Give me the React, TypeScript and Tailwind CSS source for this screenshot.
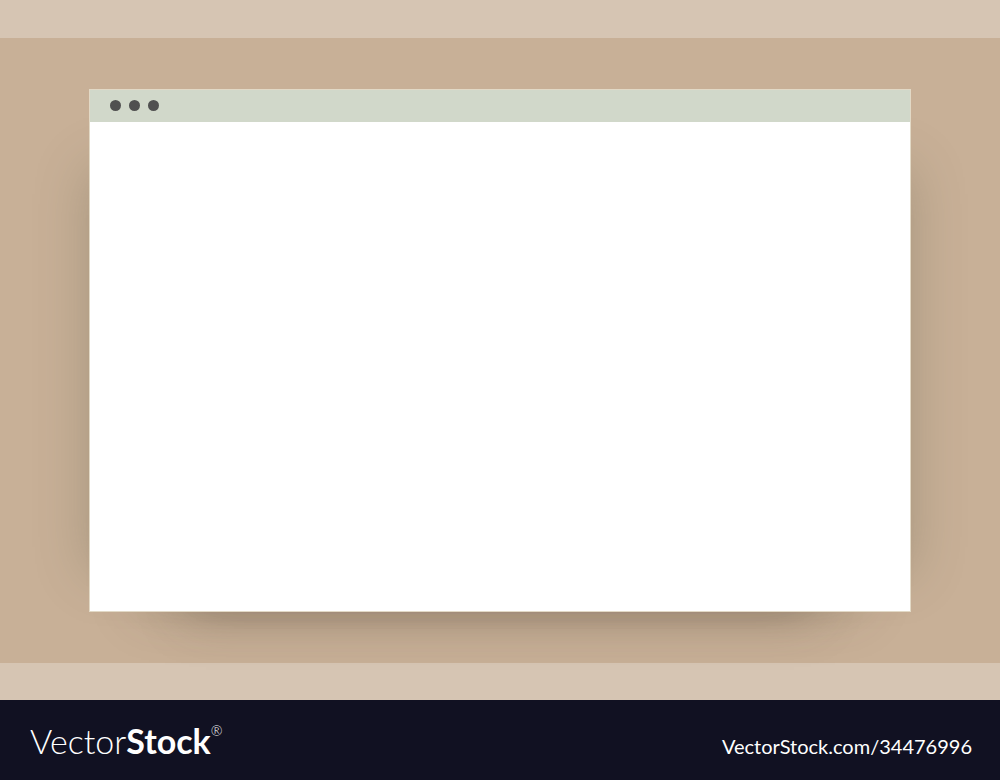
const BrowserWindow = () => {
  return (
    <div className="flex flex-1 flex-col border border-[#e2d9c6] bg-white shadow-[-60px_20px_50px_-60px_rgba(85,85,65,0.3),60px_20px_50px_-60px_rgba(85,85,65,0.3),0_100px_48px_-100px_rgba(80,68,55,0.35),0_50px_48px_-52px_rgba(80,68,55,0.25)]">
      {/* Title bar */}
      <div className="flex h-8 items-center gap-2 bg-[#d1d8ca] px-5 pb-0.5">
        <span className="h-[11px] w-[11px] rounded-full bg-[#505050]" />
        <span className="h-[11px] w-[11px] rounded-full bg-[#505050]" />
        <span className="h-[11px] w-[11px] rounded-full bg-[#505050]" />
      </div>
    </div>
  );
};

const Footer = () => {
  return (
    <footer className="flex h-20 items-center justify-between bg-[#111122] pr-7 pl-[30px] text-white">
      {/* Logo */}
      <div className="flex items-start pt-0.5 font-['Lato','Noto_Sans',sans-serif] text-[34px] leading-10">
        <span className="font-light">Vector</span>
        <span className="font-bold">Stock</span>
        <span className="text-sm leading-5 font-light">®</span>
      </div>
      <p className="pt-3 font-['Lato','Noto_Sans',sans-serif] text-xl">VectorStock.com/34476996</p>
    </footer>
  );
};

export default function App() {
  return (
    <div className="flex min-h-screen flex-col bg-[#d6c5b3]">
      <main className="mt-[38px] mb-[37px] flex flex-1 flex-col bg-[#c8b097] px-[89px] pt-[51px] pb-[51px]">
        <BrowserWindow />
      </main>
      <Footer />
    </div>
  );
}
